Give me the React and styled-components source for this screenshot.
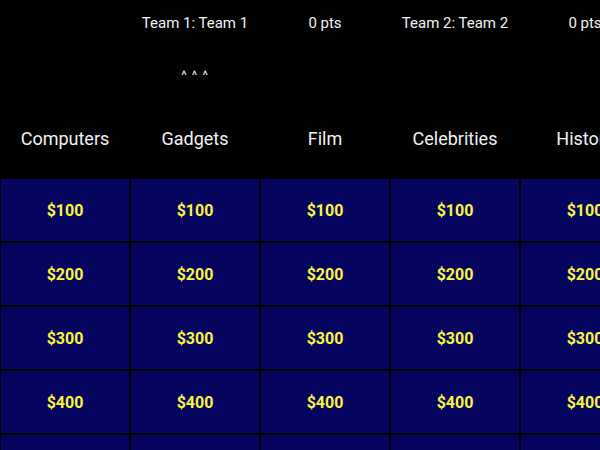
import styled, { createGlobalStyle } from "styled-components";

const categories = ["Computers", "Gadgets", "Film", "Celebrities", "History"];
const values = [100, 200, 300, 400, 500];

export default function App() {
    return (
        <>
            <Global />
            <Page>
                <ScoreRow>
                    <HeaderCell />
                    <TeamLabel>Team 1: Team 1</TeamLabel>
                    <TeamLabel>0 pts</TeamLabel>
                    <TeamLabel>Team 2: Team 2</TeamLabel>
                    <TeamLabel>0 pts</TeamLabel>
                </ScoreRow>
                <TurnRow>
                    <HeaderCell />
                    <TurnMarker>^ ^ ^</TurnMarker>
                </TurnRow>
                <CategoryRow>
                    {categories.map((c) => (
                        <Category key={c}>{c}</Category>
                    ))}
                </CategoryRow>
                <Board>
                    {values.map((v) =>
                        categories.map((c) => <Clue key={c + v}>${v}</Clue>)
                    )}
                </Board>
            </Page>
        </>
    );
}

const Global = createGlobalStyle`
    html, body {
        margin: 0;
        background: #000;
        overflow: hidden;
    }
    body {
        font-family: Roboto, "Liberation Sans", sans-serif;
    }
`;

const Page = styled.main`
    width: 650px;
    background: #000;
    color: #f2f2f2;
`;

const Row = styled.div`
    display: grid;
    grid-template-columns: repeat(5, 130px);
    align-items: center;
    justify-items: center;
`;

const ScoreRow = styled(Row)`
    height: 46px;
`;

const TurnRow = styled(Row)`
    height: 52px;
`;

const CategoryRow = styled(Row)`
    height: 80px;
`;

const HeaderCell = styled.div``;

const TeamLabel = styled.div`
    font-size: 15px;
`;

const TurnMarker = styled.div`
    font-size: 13px;
    letter-spacing: 1px;
    padding-top: 6px;
`;

const Category = styled.div`
    font-size: 18px;
    white-space: nowrap;
`;

const Board = styled.div`
    display: grid;
    grid-template-columns: repeat(5, 130px);
    grid-auto-rows: 64px;
`;

const Clue = styled.div`
    box-sizing: border-box;
    border: 1px solid #000;
    background: #050560;
    color: #fbf53c;
    font-size: 16px;
    font-weight: 700;
    padding-top: 1px;
    display: flex;
    align-items: center;
    justify-content: center;
`;
